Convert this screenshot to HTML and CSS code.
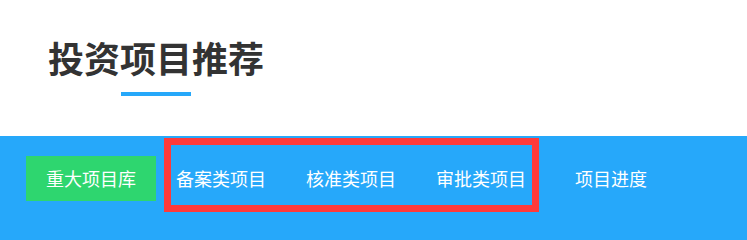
FILE: index.html
```html
<!DOCTYPE html>
<html lang="zh-CN">
<head>
<meta charset="utf-8">
<title>投资项目推荐</title>
<link rel="stylesheet" href="styles.css">
</head>
<body>
<header class="head">
  <div class="title-wrap">
    <h1 class="title">投资项目推荐</h1>
    <span class="underline"></span>
  </div>
</header>
<nav class="nav">
  <a class="item active">重大项目库</a>
  <a class="item">备案类项目</a>
  <a class="item">核准类项目</a>
  <a class="item">审批类项目</a>
  <a class="item">项目进度</a>
  <div class="highlight"></div>
</nav>
</body>
</html>
```

FILE: styles.css
```css
html {
  background: #26a8fa;
}
html, body {
  margin: 0;
  padding: 0;
  font-family: "Noto Sans CJK SC", "Noto Sans", sans-serif;
}
.head {
  height: 136px;
  box-sizing: border-box;
  padding: 39px 0 0 48px;
  background: #ffffff;
}
.title-wrap {
  display: inline-flex;
  flex-direction: column;
  align-items: center;
}
.title {
  margin: 0;
  font-size: 36px;
  line-height: 36px;
  font-weight: 700;
  color: #333333;
}
.underline {
  display: block;
  width: 70px;
  height: 4px;
  margin-top: 17px;
  background: #26a8fa;
}
.nav {
  position: relative;
  display: flex;
  padding: 20px 26px 19px;
  background: #26a8fa;
}
.item {
  width: 130px;
  height: 45px;
  line-height: 45px;
  text-align: center;
  font-size: 18px;
  color: #ffffff;
}
.item.active {
  background: #2ed66f;
}
.highlight {
  position: absolute;
  left: 164px;
  top: 2px;
  width: 375px;
  height: 74px;
  box-sizing: border-box;
  border: 7px solid #ff3a3a;
}
```
